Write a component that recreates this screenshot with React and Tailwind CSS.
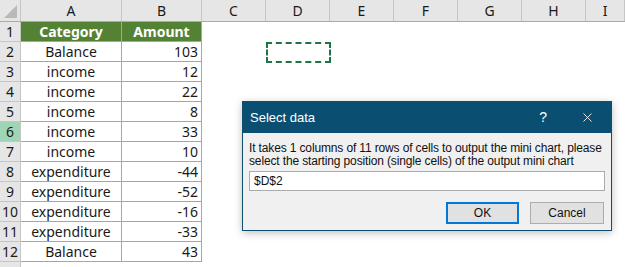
import { X } from "lucide-react";

const COLS = [
  { key: "A", w: "w-[101px]" },
  { key: "B", w: "w-[80px]" },
  { key: "C", w: "w-[64px]" },
  { key: "D", w: "w-[64px]" },
  { key: "E", w: "w-[64px]" },
  { key: "F", w: "w-[64px]" },
  { key: "G", w: "w-[64px]" },
  { key: "H", w: "w-[64px]" },
  { key: "I", w: "flex-1" },
];

const ROWS = [
  ["Balance", 103],
  ["income", 12],
  ["income", 22],
  ["income", 8],
  ["income", 33],
  ["income", 10],
  ["expenditure", -44],
  ["expenditure", -52],
  ["expenditure", -16],
  ["expenditure", -33],
  ["Balance", 43],
];

const sheetFont = { fontFamily: "'Noto Sans', sans-serif" };

export default function App() {
  return (
    <div className="relative w-[625px] h-[267px] overflow-hidden bg-white text-[#1a1a1a]" style={sheetFont}>
      {/* column headers */}
      <div className="flex h-[22px] bg-[#e6e6e6] border-b border-[#ababab]">
        <div className="w-[21px] shrink-0 border-r border-[#c6c6c6] flex items-end justify-end p-[3px]">
          <div className="w-0 h-0 border-l-[13px] border-l-transparent border-b-[13px] border-b-[#b9b9b9]" />
        </div>
        {COLS.map((c) => (
          <div
            key={c.key}
            className={`${c.w} shrink-0 border-r border-[#c6c6c6] flex items-center justify-center text-[14px] leading-none`}
          >
            {c.key}
          </div>
        ))}
      </div>

      {/* row 1: table header */}
      <Row n={1}>
        <div className="w-[101px] shrink-0 bg-[#548235] text-white font-bold text-[14px] flex items-center justify-center border-r border-b border-[#a6a6a6]">
          Category
        </div>
        <div className="w-[80px] shrink-0 bg-[#548235] text-white font-bold text-[14px] flex items-center justify-center border-r border-b border-[#a6a6a6]">
          Amount
        </div>
      </Row>

      {ROWS.map(([cat, amt], i) => (
        <Row key={i} n={i + 2}>
          <div className="w-[101px] shrink-0 text-[14px] flex items-center justify-center border-r border-b border-[#a6a6a6]">
            {cat}
          </div>
          <div className="w-[80px] shrink-0 text-[14px] flex items-center justify-end pr-[3px] border-r border-b border-[#a6a6a6]">
            {amt}
          </div>
        </Row>
      ))}

      <Row n={13} hideLabel />

      {/* marching-ants selection on D2 */}
      <div className="absolute left-[266px] top-[42px] w-[65px] h-[21px] border-2 border-dashed border-[#217346]" />

      {/* dialog */}
      <div
        className="absolute left-[242px] top-[101px] w-[370px] h-[130px] bg-[#f0f0f0] border border-[#0f4f6e] shadow-[0_2px_8px_rgba(0,0,0,0.25)] flex flex-col"
        style={{ fontFamily: "'Liberation Sans', Arial, sans-serif" }}
      >
        <div className="h-[31px] shrink-0 bg-[#0a4f72] text-white flex items-center pl-[7px] pr-[16px]">
          <span className="text-[13px] flex-1">Select data</span>
          <span className="text-[14px] mr-[33px]">?</span>
          <X className="w-[15px] h-[15px]" strokeWidth={1.4} />
        </div>
        <div className="px-[6px] pt-[9px] text-[12px] leading-[13px] tracking-[-0.14px] text-[#111] whitespace-nowrap">
          <p>It takes 1 columns of 11 rows of cells to output the mini chart, please</p>
          <p>select the starting position (single cells) of the output mini chart</p>
          <div className="mt-[3px] h-[20px] w-[356px] bg-white border border-[#acacac] flex items-center pl-[4px] text-[12px] tracking-normal">
            $D$2
          </div>
          <div className="flex justify-end gap-[11px] mt-[11px] pr-[1px] tracking-normal">
            <button className="w-[73px] h-[22px] bg-[#e1e1e1] border-2 border-[#0078d7] text-[12px]">OK</button>
            <button className="w-[74px] h-[22px] bg-[#e1e1e1] border border-[#adadad] text-[12px]">Cancel</button>
          </div>
        </div>
      </div>
    </div>
  );
}

function Row({ n, hideLabel, children }) {
  return (
    <div className="flex h-[20px]">
      <div
        className={`w-[21px] shrink-0 border-r border-b border-[#c6c6c6] text-[14px] flex items-center justify-center leading-none ${
          n === 6 ? "bg-[#9fd5b7]" : "bg-[#e6e6e6]"
        }`}
      >
        {hideLabel ? "" : n}
      </div>
      {children}
    </div>
  );
}
